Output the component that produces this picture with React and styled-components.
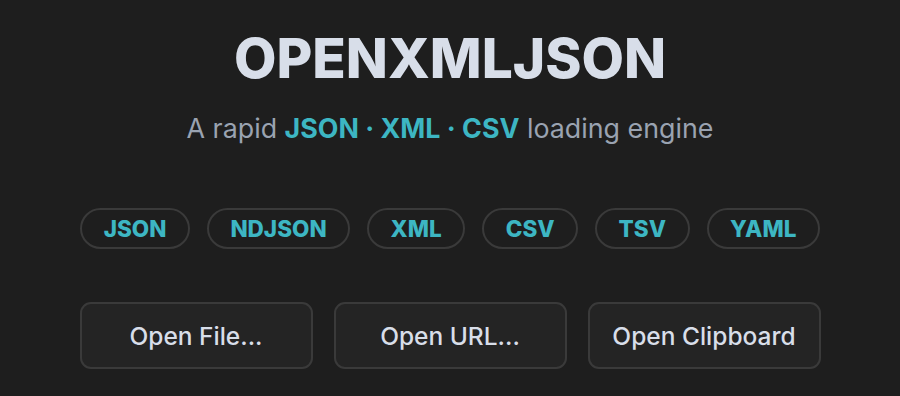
import React from 'react';
import styled, { createGlobalStyle } from 'styled-components';

const GlobalStyle = createGlobalStyle`
  html, body {
    margin: 0;
    padding: 0;
    background: #1e1e1e;
  }
  body {
    font-family: Inter, "Noto Sans", sans-serif;
    -webkit-font-smoothing: antialiased;
  }
`

const Page = styled.div`
  width: 900px;
  height: 396px;
  box-sizing: border-box;
  padding-top: 25px;
  display: flex;
  flex-direction: column;
  align-items: center;
  background: #1e1e1e;
  overflow: hidden;
`

const Title = styled.h1`
  margin: 0;
  font-size: 55px;
  line-height: 66px;
  font-weight: 800;
  color: #d8dee9;
  letter-spacing: 0;
`

const Tagline = styled.p`
  margin: 22px 0 0;
  font-size: 26.8px;
  line-height: 30px;
  color: #9aa3b1;
`

const Accent = styled.strong`
  color: #3db6c3;
  font-weight: 700;
`

const Formats = styled.div`
  display: flex;
  gap: 17px;
  margin-top: 65px;
`

const Pill = styled.span`
  display: inline-flex;
  align-items: center;
  height: 41px;
  box-sizing: border-box;
  padding: 0 21.5px;
  border: 2px solid #3a3a3a;
  border-radius: 21px;
  color: #3db6c3;
  font-size: 22.5px;
  font-weight: 800;
`

const Actions = styled.div`
  display: flex;
  gap: 21px;
  margin-top: 53px;
`

const ActionButton = styled.button`
  width: 233px;
  height: 67px;
  box-sizing: border-box;
  background: #242424;
  border: 2px solid #3a3a3a;
  border-radius: 11px;
  color: #d8dee9;
  font-family: inherit;
  font-size: 24.5px;
  font-weight: 500;
  cursor: pointer;
`

const formats = ['JSON', 'NDJSON', 'XML', 'CSV', 'TSV', 'YAML']
const actions = ['Open File...', 'Open URL...', 'Open Clipboard']

export default function App() {
  return (
    <>
      <GlobalStyle />
      <Page>
        <Title>OPENXMLJSON</Title>
        <Tagline>
          A rapid <Accent>JSON · XML · CSV</Accent> loading engine
        </Tagline>
        <Formats>
          {formats.map(f => (
            <Pill key={f}>{f}</Pill>
          ))}
        </Formats>
        <Actions>
          {actions.map(a => (
            <ActionButton key={a}>{a}</ActionButton>
          ))}
        </Actions>
      </Page>
    </>
  )
}
